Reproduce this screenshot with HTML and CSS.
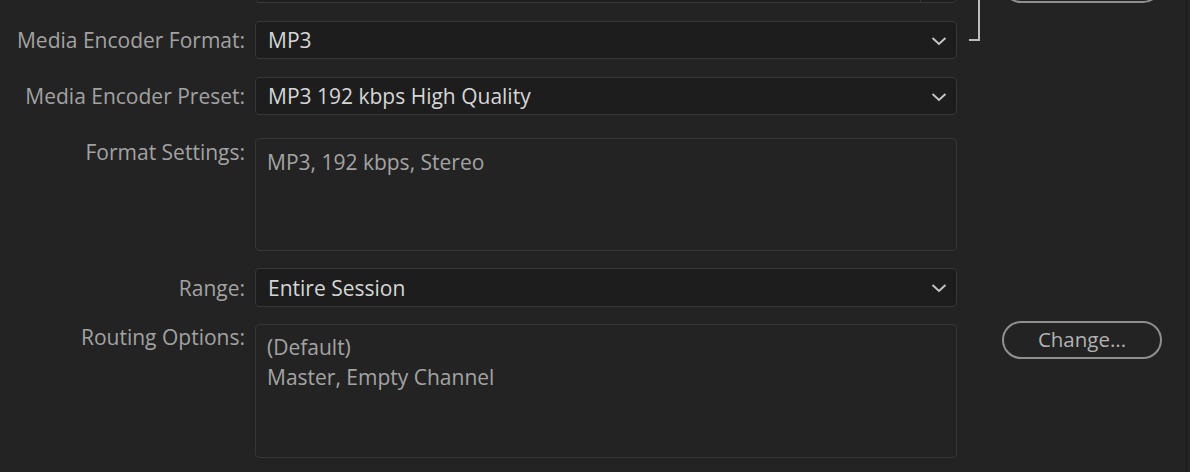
FILE: index.html
```html
<!DOCTYPE html>
<html>
<head>
<meta charset="utf-8">
<link rel="stylesheet" href="styles.css">
</head>
<body>
<div class="panel">
  <div class="row row-top">
    <div class="label"></div>
    <div class="field path-field"><div class="path-main"></div><div class="path-btn"></div></div>
    <div class="side"><div class="pill pill-cut"></div></div>
  </div>

  <div class="row row-dd first-dd">
    <div class="label">Media Encoder Format:</div>
    <div class="field dropdown">
      <span class="value">MP3</span>
      <svg class="chev" width="16" height="10" viewBox="0 0 16 10"><path d="M1.5 2 L8 8 L14.5 2" fill="none" stroke="#c4c4c4" stroke-width="2"/></svg>
    </div>
    <div class="side"><div class="connector"></div></div>
  </div>

  <div class="row row-dd">
    <div class="label">Media Encoder Preset:</div>
    <div class="field dropdown">
      <span class="value">MP3 192 kbps High Quality</span>
      <svg class="chev" width="16" height="10" viewBox="0 0 16 10"><path d="M1.5 2 L8 8 L14.5 2" fill="none" stroke="#c4c4c4" stroke-width="2"/></svg>
    </div>
    <div class="side"></div>
  </div>

  <div class="row row-box row-format">
    <div class="label">Format Settings:</div>
    <div class="field textbox format-box">
      <div class="line">MP3, 192 kbps, Stereo</div>
    </div>
    <div class="side"></div>
  </div>

  <div class="row row-dd row-range">
    <div class="label">Range:</div>
    <div class="field dropdown">
      <span class="value">Entire Session</span>
      <svg class="chev" width="16" height="10" viewBox="0 0 16 10"><path d="M1.5 2 L8 8 L14.5 2" fill="none" stroke="#c4c4c4" stroke-width="2"/></svg>
    </div>
    <div class="side"></div>
  </div>

  <div class="row row-box row-routing">
    <div class="label">Routing Options:</div>
    <div class="field textbox routing-box">
      <div class="line">(Default)</div>
      <div class="line">Master, Empty Channel</div>
    </div>
    <div class="side side-btn"><div class="pill">Change...</div></div>
  </div>
</div>
</body>
</html>
```

FILE: styles.css
```css
html, body {
  margin: 0;
  padding: 0;
  background: #232323;
}
body {
  width: 1190px;
  height: 472px;
  overflow: hidden;
  font-family: "Open Sans", "Noto Sans", sans-serif;
  font-size: 21px;
}
.panel {
  width: 1187px;
  height: 472px;
  border-right: 1px solid #1a1a1a;
  display: flex;
  flex-direction: column;
  box-sizing: border-box;
}
.row {
  display: flex;
  align-items: center;
  position: relative;
}
.label {
  width: 245px;
  flex: none;
  text-align: right;
  color: #a2a2a2;
  line-height: 28px;
  white-space: nowrap;
}
.field {
  margin-left: 10px;
  width: 702px;
  flex: none;
  box-sizing: border-box;
  border: 1px solid #363636;
  border-radius: 4px;
}
.side {
  margin-left: 45px;
  width: 160px;
  flex: none;
  position: relative;
  align-self: stretch;
}

/* top partially visible row */
.row-top {
  margin-top: -35px;
  height: 38px;
}
.path-field {
  height: 38px;
  display: flex;
  background: #1f1f1f;
  border-color: #383838;
}
.path-main {
  flex: 1;
}
.path-btn {
  width: 35px;
  border-left: 1px solid #363636;
}
.pill {
  box-sizing: border-box;
  height: 38px;
  width: 160px;
  border: 2px solid #8f8f8f;
  border-radius: 19px;
  color: #b2b2b2;
  font-size: 20.5px;
  display: flex;
  align-items: center;
  justify-content: center;
  line-height: 1;
  padding-bottom: 1px;
}

/* dropdowns */
.row-dd {
  margin-top: 18px;
}
.dropdown {
  height: 38px;
  background: #1d1d1d;
  display: flex;
  align-items: center;
  justify-content: space-between;
  padding: 0 9px 0 12px;
}
.row-range .dropdown {
  height: 39px;
}
.dropdown .value {
  color: #d6d6d6;
  white-space: nowrap;
}
.chev {
  display: block;
  margin-top: 1px;
}

.connector {
  position: absolute;
  left: -33px;
  top: -40px;
  width: 11px;
  height: 60px;
  border-right: 2px solid #bdbdbd;
  border-bottom: 2px solid #bdbdbd;
  box-sizing: border-box;
}

/* text boxes */
.row-box {
  align-items: flex-start;
}
.row-format .label {
  margin-top: 0;
}
.row-routing .label {
  margin-top: -1px;
}
.row-format {
  margin-top: 23px;
}
.row-range {
  margin-top: 17px;
}
.row-routing {
  margin-top: 17px;
}
.textbox {
  background: #232323;
  padding-left: 11px;
  color: #a3a3a3;
  line-height: 30px;
}
.format-box {
  height: 113px;
  padding-top: 8px;
}
.routing-box {
  height: 134px;
  padding-top: 7px;
}
.side-btn .pill {
  margin-top: -3px;
}
```
